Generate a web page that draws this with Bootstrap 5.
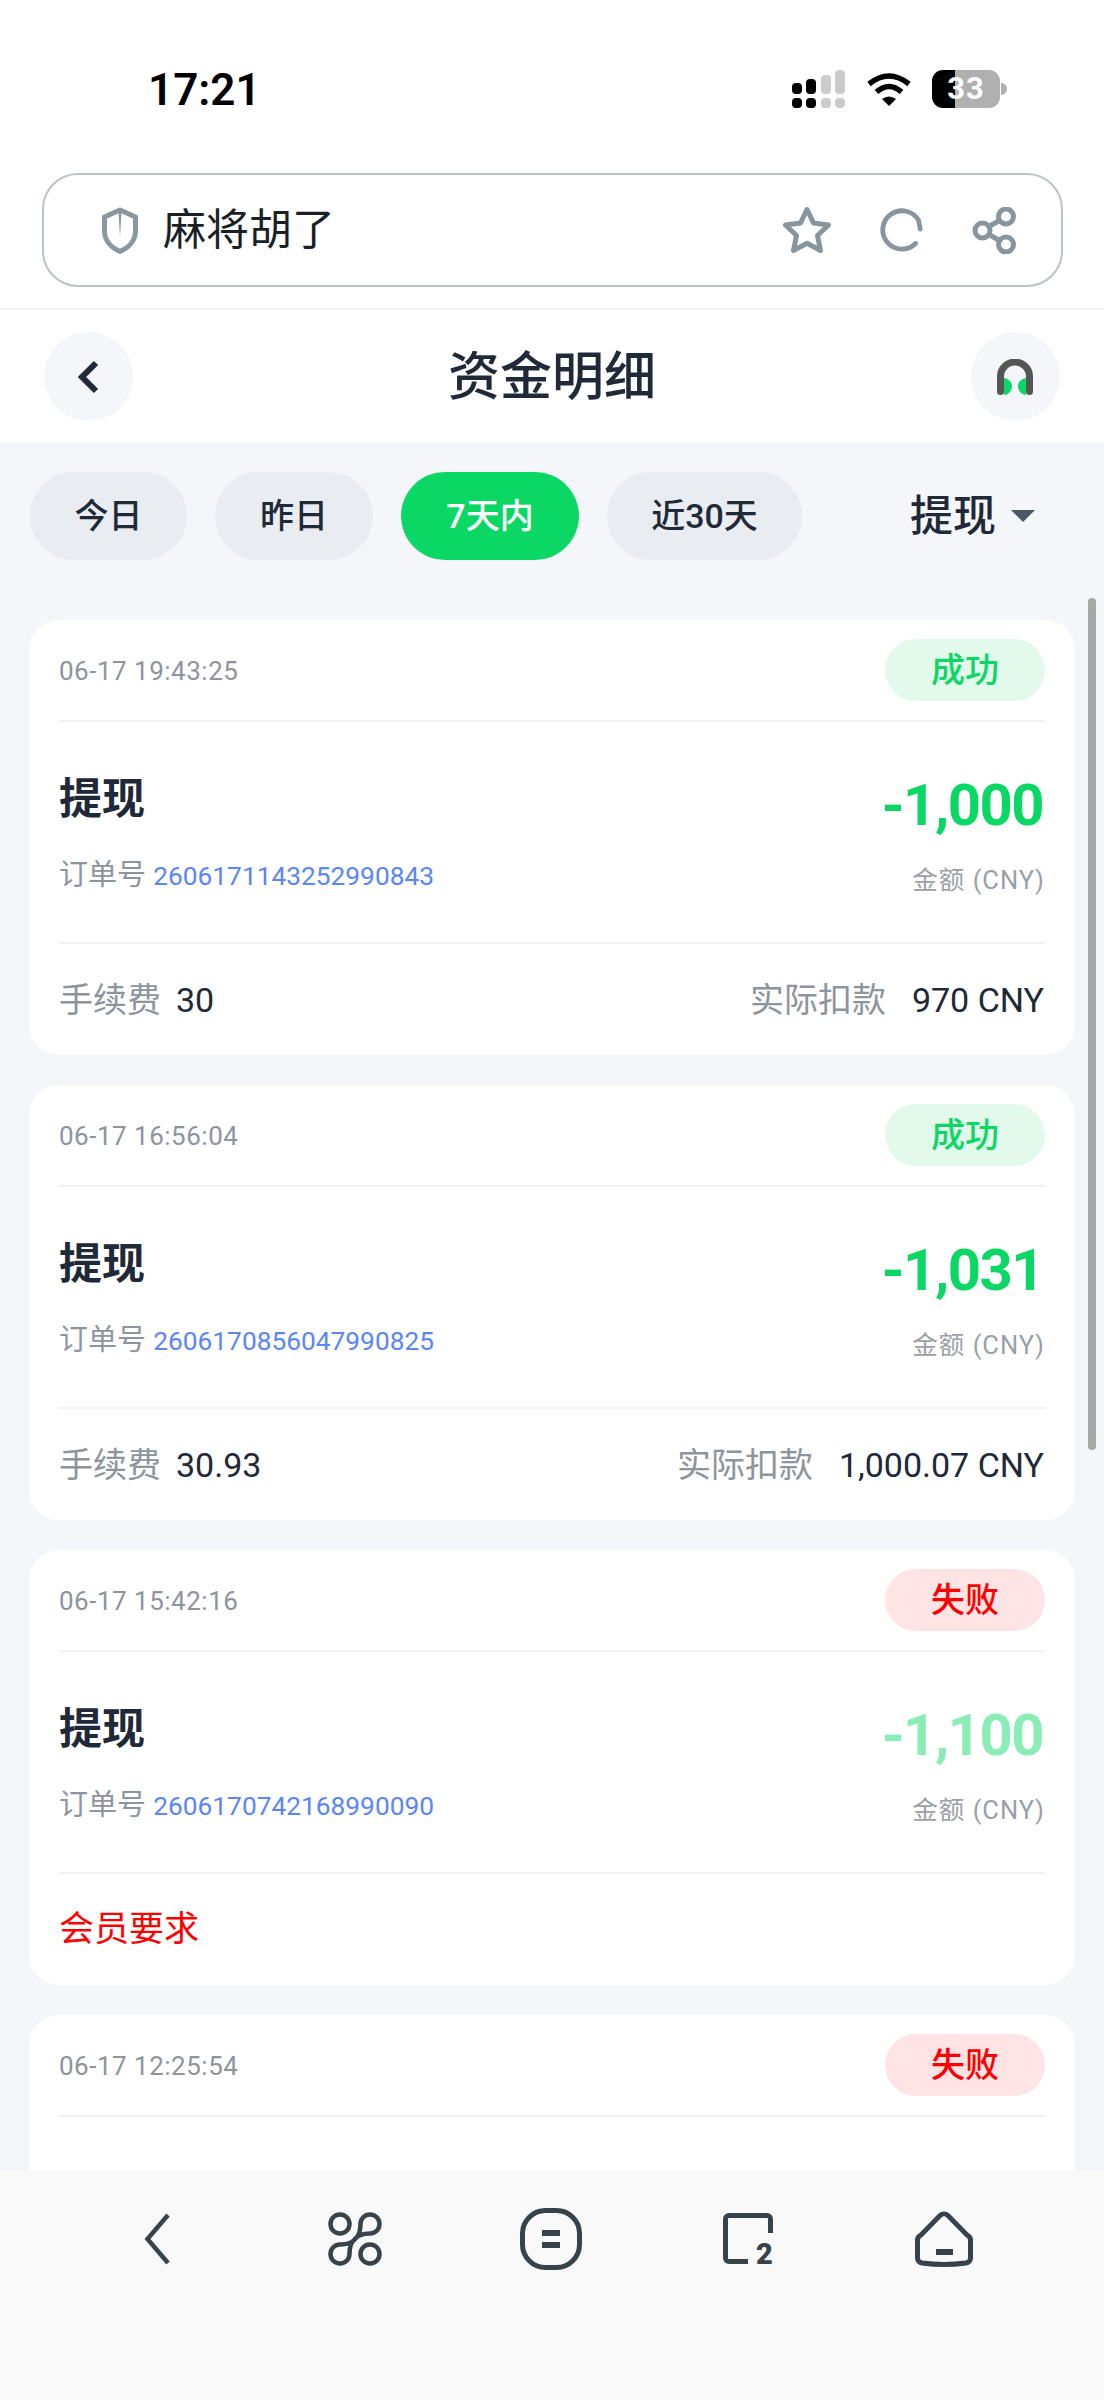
<!DOCTYPE html>
<html lang="zh">
<head>
  <meta charset="UTF-8" />
  <meta name="viewport" content="width=device-width, initial-scale=1.0"/>
  <title>资金明细</title>
  <link href="https://cdn.jsdelivr.net/npm/bootstrap@5.3.0/dist/css/bootstrap.min.css" rel="stylesheet"/>
  <style>
    body {
      height: 2400px;
      background-color: #f4f6fa;
      font-family: Roboto, "Noto Sans CJK SC", sans-serif;
      color: #1f2937;
    }
    .status-row { height: 173px; padding: 70px 97px 0 148px; }
    .clock { font-size: 44px; font-weight: 600; line-height: 40px; color: #000; }
    .battery-pill {
      width: 68px; height: 38px; border-radius: 11px;
      background: linear-gradient(90deg, #000 34%, #b0b0b0 34%);
      color: #fff; font-size: 31px; font-weight: 700; line-height: 38px; letter-spacing: 1px;
    }
    .battery-nub { width: 6px; height: 12px; margin-left: 1px; border-radius: 0 6px 6px 0; background: #b0b0b0; }
    .addr-wrap { padding: 0 41px 21px 42px; border-bottom: 2px solid #f1f2f4; }
    .addr-bar {
      height: 114px; padding: 0 43px 0 58px;
      border: 2px solid #bcc3c8; border-radius: 36px;
    }
    .addr-name { font-size: 43px; line-height: 1; margin-left: 25px; color: #1a1f26; }
    .addr-icons { gap: 47px; }
    .title-row { height: 133px; padding: 0 44px; background: #fff; }
    .round-btn { width: 89px; height: 89px; background: #f4f6fa; }
    .page-title { font-size: 52px; font-weight: 500; line-height: 1; margin: 0; padding-top: 2px; color: #1f2937; }
    .filter-row { height: 177px; padding: 29px 30px 0; }
    .range-tab {
      height: 88px; padding: 0; border-radius: 44px; border: 0;
      background: #e9ecf1; color: #1f2937; font-size: 34px; font-weight: 500;
    }
    .range-tab.is-on { background: #0bd765; color: #fff; }
    .kind-pick { font-size: 43px; font-weight: 500; line-height: 1; color: #1f2937; margin-right: 39px; }
    .kind-caret {
      width: 0; height: 0; margin-left: 15px;
      border-left: 12px solid transparent; border-right: 12px solid transparent;
      border-top: 12px solid #4b5563;
    }
    .rec-list { padding: 0 29px; gap: 30px; }
    .rec-card { height: 435px; padding: 0 30px; border: 0; border-radius: 30px; background: #fff; flex: none; }
    .rec-tail { height: 384px; border-radius: 30px 30px 0 0; }
    .rec-head { height: 102px; border-bottom: 2px solid #f1f2f4; }
    .rec-date { padding-top: 2px; font-size: 26px; color: #8e949c; letter-spacing: .5px; }
    .rec-state { width: 160px; height: 62px; border-radius: 31px; font-size: 34px; font-weight: 500; }
    .rec-state.is-ok { background: #e3f9ec; color: #0bd765; }
    .rec-state.is-bad { background: #ffe4e6; color: #f00; }
    .rec-body { height: 222px; padding-top: 49px; border-bottom: 2px solid #f1f2f4; }
    .rec-type { font-size: 43px; font-weight: 700; line-height: 56px; color: #1f2937; }
    .rec-order { margin-top: 28px; font-size: 29px; line-height: 40px; color: #8e949c; }
    .rec-no { font-size: 26.3px; color: #5b86f6; }
    .rec-amt { margin: -1px 2px 0 0; font-size: 58px; font-weight: 700; line-height: 70px; letter-spacing: -1.5px; color: #0bd765; }
    .rec-amt.is-dim { color: #8aedb6; }
    .rec-unit { margin-top: 22px; font-size: 25.5px; line-height: 36px; letter-spacing: 1px; color: #9aa0a8; }
    .rec-foot { height: 111px; padding: 2px 1px 0 0; font-size: 34px; color: #8e949c; }
    .foot-val { color: #1f2937; margin-left: 15px; }
    .foot-val-far { margin-left: 26px; }
    .rec-reason { height: 111px; padding-top: 2px; font-size: 35px; color: #f00; }
    .scroll-thumb { position: absolute; left: 1088px; top: 598px; width: 8px; height: 852px; border-radius: 4px; background: #a8a8a8; }
    .tool-bar { position: absolute; left: 0; right: 0; bottom: 0; height: 229px; padding: 18px 110px 0 108px; background: #f9f9f9; }
    .tool-cell { width: 100px; height: 100px; }
    .tab-icon { margin: 12px 0 0 4px; }
  </style>
</head>
<body class="position-relative overflow-hidden">

  <div class="bg-white">
    <div class="status-row d-flex justify-content-between align-items-start">
      <div class="clock">17:21</div>
      <div class="d-flex align-items-start">
        <svg width="53" height="38" viewBox="0 0 53 38">
          <rect x="0" y="13" width="10" height="11" rx="4" fill="#000"/>
          <rect x="14" y="9" width="10" height="15" rx="4" fill="#000"/>
          <rect x="29" y="5" width="10" height="19" rx="4" fill="#ccc"/>
          <rect x="43" y="0" width="10" height="24" rx="4" fill="#ccc"/>
          <rect x="0" y="28" width="10" height="10" rx="4" fill="#000"/>
          <rect x="14" y="28" width="10" height="10" rx="4" fill="#000"/>
          <rect x="29" y="28" width="10" height="10" rx="4" fill="#ccc"/>
          <rect x="43" y="28" width="10" height="10" rx="4" fill="#ccc"/>
        </svg>
        <svg width="46" height="36" viewBox="0 0 46 36" style="margin:2px 0 0 21px">
          <path d="M3 12 Q23 -4 43 12" fill="none" stroke="#000" stroke-width="5.5"/>
          <path d="M10.5 20 Q23 9 35.5 20" fill="none" stroke="#000" stroke-width="5.5"/>
          <path d="M16 27 Q23 22 30 27 L23 34 Z" fill="#000"/>
        </svg>
        <div class="d-flex align-items-center" style="margin-left:20px">
          <div class="battery-pill text-center">33</div>
          <div class="battery-nub"></div>
        </div>
      </div>
    </div>
    <div class="addr-wrap">
      <div class="addr-bar d-flex align-items-center justify-content-between">
        <div class="d-flex align-items-center">
          <svg width="36" height="47" viewBox="0 0 36 47">
            <path d="M18 3 L33.5 10 V24 C33.5 34 26 41 18 44.5 C10 41 2.5 34 2.5 24 V10Z" fill="none" stroke="#8a98a0" stroke-width="5" stroke-linejoin="round"/>
            <path d="M16.5 5 H19.5 L18 30 Z" fill="#8a98a0"/>
          </svg>
          <span class="addr-name">麻将胡了</span>
        </div>
        <div class="addr-icons d-flex align-items-center">
          <svg width="50" height="48" viewBox="0 0 50 48">
            <path d="M25 3.5 L31.5 17 L46.5 19 L35.5 29.5 L38.5 44.5 L25 37.2 L11.5 44.5 L14.5 29.5 L3.5 19 L18.5 17 Z" fill="none" stroke="#87959e" stroke-width="5" stroke-linejoin="round"/>
          </svg>
          <svg width="46" height="46" viewBox="0 0 48 48">
            <path d="M38.1 38.1 A20 20 0 1 1 41.3 14 L43 23" fill="none" stroke="#87959e" stroke-width="5" stroke-linecap="round" stroke-linejoin="round"/>
          </svg>
          <svg width="46" height="47" viewBox="0 0 46 47">
            <circle cx="34" cy="9.5" r="7.5" fill="none" stroke="#87959e" stroke-width="5"/>
            <circle cx="10.5" cy="23.5" r="7.5" fill="none" stroke="#87959e" stroke-width="5"/>
            <circle cx="34" cy="37.5" r="7.5" fill="none" stroke="#87959e" stroke-width="5"/>
            <path d="M17 19.5 L27.5 13.5 M17 27.5 L27.5 33.5" stroke="#87959e" stroke-width="5"/>
          </svg>
        </div>
      </div>
    </div>
    <div class="title-row d-flex align-items-center justify-content-between">
      <div class="round-btn rounded-circle d-flex align-items-center justify-content-center">
        <svg width="24" height="36" viewBox="0 0 24 36"><path d="M19 4 L5 18 L19 32" fill="none" stroke="#1f2937" stroke-width="6"/></svg>
      </div>
      <h1 class="page-title">资金明细</h1>
      <div class="round-btn rounded-circle d-flex align-items-center justify-content-center">
        <svg width="36" height="36" viewBox="0 0 36 36">
          <path d="M7 19 C12 20 15 23 15 27 C15 32 11 36 7 36 Z M29 19 C24 20 21 23 21 27 C21 32 25 36 29 36 Z" fill="#0bd765"/>
          <path d="M3.5 32.5 V17.5 A14.5 14.5 0 0 1 32.5 17.5 V32.5" fill="none" stroke="#565656" stroke-width="7" stroke-linecap="round"/>
        </svg>
      </div>
    </div>
  </div>

  <div class="filter-row d-flex align-items-start justify-content-between">
    <div class="d-flex" style="gap:28px">
      <button class="range-tab" type="button" style="width:157px">今日</button>
      <button class="range-tab" type="button" style="width:158px">昨日</button>
      <button class="range-tab is-on" type="button" style="width:178px">7天内</button>
      <button class="range-tab" type="button" style="width:195px">近30天</button>
    </div>
    <div class="d-flex align-items-center" style="height:88px">
      <span class="kind-pick d-flex align-items-center">提现<span class="kind-caret"></span></span>
    </div>
  </div>

  <div class="rec-list d-flex flex-column">
    <div class="rec-card card">
      <div class="rec-head d-flex align-items-center justify-content-between">
        <span class="rec-date">06-17 19:43:25</span>
        <span class="rec-state is-ok d-flex align-items-center justify-content-center">成功</span>
      </div>
      <div class="rec-body d-flex justify-content-between">
        <div>
          <div class="rec-type">提现</div>
          <div class="rec-order">订单号 <span class="rec-no">2606171143252990843</span></div>
        </div>
        <div class="text-end">
          <div class="rec-amt">-1,000</div>
          <div class="rec-unit">金额 (CNY)</div>
        </div>
      </div>
      <div class="rec-foot d-flex align-items-center justify-content-between">
        <span>手续费<span class="foot-val">30</span></span>
        <span>实际扣款<span class="foot-val foot-val-far">970 CNY</span></span>
      </div>
    </div>

    <div class="rec-card card">
      <div class="rec-head d-flex align-items-center justify-content-between">
        <span class="rec-date">06-17 16:56:04</span>
        <span class="rec-state is-ok d-flex align-items-center justify-content-center">成功</span>
      </div>
      <div class="rec-body d-flex justify-content-between">
        <div>
          <div class="rec-type">提现</div>
          <div class="rec-order">订单号 <span class="rec-no">2606170856047990825</span></div>
        </div>
        <div class="text-end">
          <div class="rec-amt">-1,031</div>
          <div class="rec-unit">金额 (CNY)</div>
        </div>
      </div>
      <div class="rec-foot d-flex align-items-center justify-content-between">
        <span>手续费<span class="foot-val">30.93</span></span>
        <span>实际扣款<span class="foot-val foot-val-far">1,000.07 CNY</span></span>
      </div>
    </div>

    <div class="rec-card card">
      <div class="rec-head d-flex align-items-center justify-content-between">
        <span class="rec-date">06-17 15:42:16</span>
        <span class="rec-state is-bad d-flex align-items-center justify-content-center">失败</span>
      </div>
      <div class="rec-body d-flex justify-content-between">
        <div>
          <div class="rec-type">提现</div>
          <div class="rec-order">订单号 <span class="rec-no">2606170742168990090</span></div>
        </div>
        <div class="text-end">
          <div class="rec-amt is-dim">-1,100</div>
          <div class="rec-unit">金额 (CNY)</div>
        </div>
      </div>
      <div class="rec-reason d-flex align-items-center">会员要求</div>
    </div>

    <div class="rec-card rec-tail card">
      <div class="rec-head d-flex align-items-center justify-content-between">
        <span class="rec-date">06-17 12:25:54</span>
        <span class="rec-state is-bad d-flex align-items-center justify-content-center">失败</span>
      </div>
    </div>
  </div>

  <div class="scroll-thumb"></div>

  <div class="tool-bar d-flex align-items-start justify-content-between">
    <div class="tool-cell d-flex align-items-center justify-content-center">
      <svg width="28" height="54" viewBox="0 0 28 54"><path d="M24 3 L3.5 27 L24 51" fill="none" stroke="#37434b" stroke-width="4.5"/></svg>
    </div>
    <div class="tool-cell d-flex align-items-center justify-content-center">
      <svg width="54" height="54" viewBox="0 0 54 54" fill="none" stroke="#37434b" stroke-width="4.5" stroke-linejoin="round">
        <circle cx="12" cy="12" r="9.5"/>
        <circle cx="42" cy="42" r="9.5"/>
        <path d="M27 27 C31 24 32.5 18 32.5 12 A9.5 9.5 0 1 1 42 21.5 C36 21.5 30 23 27 27 Z"/>
        <path d="M27 27 C23 30 21.5 36 21.5 42 A9.5 9.5 0 1 1 12 32.5 C18 32.5 24 31 27 27 Z"/>
      </svg>
    </div>
    <div class="tool-cell d-flex align-items-center justify-content-center">
      <svg width="62" height="62" viewBox="0 0 62 62">
        <rect x="2.5" y="2.5" width="57" height="57" rx="23" fill="none" stroke="#37434b" stroke-width="5"/>
        <rect x="22" y="22" width="18" height="6" fill="#37434b"/>
        <rect x="22" y="34" width="18" height="6" fill="#37434b"/>
      </svg>
    </div>
    <div class="tool-cell d-flex align-items-center justify-content-center">
      <svg class="tab-icon" width="54" height="64" viewBox="0 0 54 64">
        <path d="M25 48.5 H6 A3.5 3.5 0 0 1 2.5 45 V6 A3.5 3.5 0 0 1 6 2.5 H44 A3.5 3.5 0 0 1 47.5 6 V20" fill="none" stroke="#37434b" stroke-width="5"/>
        <text x="33" y="51" font-family="Roboto, sans-serif" font-size="29" font-weight="900" fill="#37434b">2</text>
      </svg>
    </div>
    <div class="tool-cell d-flex align-items-center justify-content-center">
      <svg width="58" height="57" viewBox="0 0 58 57">
        <path d="M25 4.5 A6 6 0 0 1 33 4.5 L52 24 A6 6 0 0 1 55.5 30 V47 A5 5 0 0 1 51 52 Q29 55 7 52 A5 5 0 0 1 2.5 47 V30 A6 6 0 0 1 6 24 Z" fill="none" stroke="#37434b" stroke-width="5"/>
        <rect x="21" y="38" width="17" height="6" fill="#37434b"/>
      </svg>
    </div>
  </div>

  <script src="https://cdn.jsdelivr.net/npm/bootstrap@5.3.0/dist/js/bootstrap.bundle.min.js"></script>
</body>
</html>
